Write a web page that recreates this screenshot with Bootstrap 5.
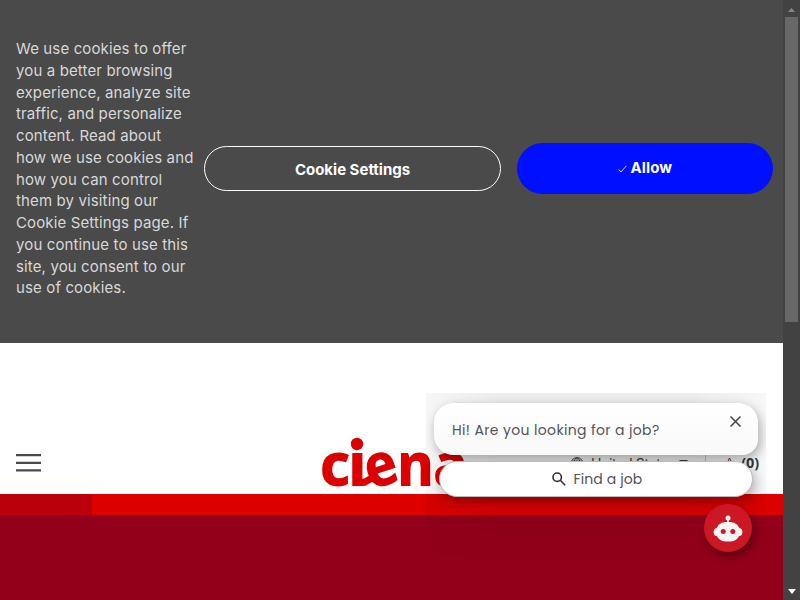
<!DOCTYPE html>
<html lang="en">
<head>
<meta charset="utf-8">
<meta name="viewport" content="width=device-width, initial-scale=1">
<title>Ciena careers</title>
<link href="https://cdn.jsdelivr.net/npm/bootstrap@5.3.0/dist/css/bootstrap.min.css" rel="stylesheet">
<style>
body{width:800px;height:600px;font-family:Inter,"Liberation Sans",sans-serif;background:#fff}
.page{width:783px}
.cookie{height:343px;background:#4a4a4a}
.cookie-copy{width:188px;margin:0 0 6px 16px;font-size:15px;line-height:21.75px;letter-spacing:.13px;color:#d8d8d8;white-space:nowrap}
.cookie-copy span{display:block}
.cookie-actions{margin-bottom:6px}
.btn-settings{width:297px;height:45px;border:1px solid #fff;border-radius:23px;color:#fff;font-weight:700;font-size:15px;letter-spacing:0;padding:3px 0 0}
.btn-allow{width:256px;height:51px;margin-left:16px;border:0;border-radius:26px;background:#000fff;color:#fff;font-weight:700;font-size:15px;letter-spacing:.15px;padding:0}
.site-head{height:151px}
.burger{width:25px;margin:111px 0 0 16px}
.brand-logo{margin:90px 0 0 276px;overflow:visible}
.links{margin:111px 0 0 103px;font-size:14px;line-height:20px;color:#444}
.place{margin-left:7px;letter-spacing:-.35px}
.divide{width:1px;height:18px;margin:0 16px 0 17px;background:#ccc}
.saved{font:700 14.5px/20px "Open Sans",sans-serif;color:#333b4b;margin:-2px 0 0 4px}
.strip{height:21px;background:#d00}
.strip-dark{width:92px;background:#b9000b}
.hero{height:85px;background:#93001a}
.widget{left:426px;top:393px;width:340px;height:180px;padding:10px 8px;overflow:hidden}
.haze{left:0;top:0;width:340px;height:180px;background:linear-gradient(180deg,rgba(0,0,0,.075),rgba(0,0,0,.08) 35%,rgba(0,0,0,.09) 58%,rgba(0,0,0,.02) 80%,transparent);-webkit-mask-image:linear-gradient(90deg,rgba(0,0,0,.45),#000 22%,#000 78%,rgba(0,0,0,.4))}
.bubble{position:relative;width:324px;height:52px;border-radius:20px 20px 16px 20px;background:linear-gradient(180deg,#fff,#f9f9f9);box-shadow:2px 4px 11px rgba(0,0,0,.32);padding:2px 17px 0 18px}
.close-x{margin-top:-17px}
.chat-text{font:400 14px/24px Poppins,Lato,sans-serif;letter-spacing:.36px;color:#555;white-space:nowrap}
.find{position:relative;width:314px;height:36px;margin:6px 0 0 5px;padding-left:2px;border:1px solid #bbb;border-radius:18px;background:#fff;box-shadow:2px 4px 12px rgba(0,0,0,.3)}
.find .chat-text{letter-spacing:.1px}
.bot{left:704px;top:504px;width:48px;height:48px;background:#cc1824;box-shadow:2px 4px 9px rgba(0,0,0,.4)}
.scroll{width:17px;background:#424242}
.thumb{width:13px;height:305px;margin-top:5px;background:#686868}
.arrow-down{margin-bottom:2px}
</style>
<script src="https://cdn.jsdelivr.net/npm/bootstrap@5.3.0/dist/js/bootstrap.bundle.min.js"></script>
</head>
<body class="d-flex overflow-hidden position-relative">
<main class="page flex-shrink-0">
  <section class="cookie d-flex align-items-center">
    <p class="cookie-copy"><span>We use cookies to offer</span><span>you a better browsing</span><span>experience, analyze site</span><span>traffic, and personalize</span><span>content. Read about</span><span>how we use cookies and</span><span>how you can control</span><span>them by visiting our</span><span>Cookie Settings page. If</span><span>you continue to use this</span><span>site, you consent to our</span><span>use of cookies.</span></p>
    <div class="cookie-actions d-flex align-items-center">
      <button class="btn btn-settings">Cookie Settings</button>
      <button class="btn btn-allow"><svg width="9" height="8" viewBox="0 0 9 8" fill="none" stroke="#d9dcff"><path d="M.6 4.4 3 7 8.4.8"/></svg> Allow</button>
    </div>
  </section>
  <header class="site-head d-flex align-items-start">
    <svg class="burger flex-shrink-0" height="18" viewBox="0 0 25 18"><path d="M0 1h25M0 8.8h25M0 16.3h25" stroke="#4a4a4a" stroke-width="2.3"/></svg>
    <svg class="brand-logo flex-shrink-0" width="150" height="60" viewBox="0 0 150 60" fill="#d00" font-family="Noto Sans" font-weight="800" font-size="60"><text x="2.5" y="53" textLength="31" lengthAdjust="spacingAndGlyphs">c</text><text x="31" y="53">ı</text><text x="48" y="53" textLength="33" lengthAdjust="spacingAndGlyphs" transform="rotate(-18 64 37)">e</text><text x="80" y="53" textLength="37" lengthAdjust="spacingAndGlyphs">n</text><text x="116" y="53" textLength="35" lengthAdjust="spacingAndGlyphs">a</text><circle cx="40" cy="11" r="6.2"/><path d="M39 43q1 8 9 6l7-4" fill="none" stroke="#d00" stroke-width="7"/></svg>
    <div class="links d-flex align-items-center text-nowrap">
      <svg width="14" height="14" viewBox="0 0 14 14" fill="none" stroke="#444"><circle cx="7" cy="7" r="6.3"/><ellipse cx="7" cy="7" rx="3" ry="6.3"/><path d="M7 1v12M1 7h12M2 4h10M2 10h10" stroke-width=".7"/></svg>
      <span class="place">United States</span>
      <svg class="ms-1 mb-1" width="9" height="5" viewBox="0 0 9 5"><path d="M0 0h9L4.5 5z" fill="#444"/></svg>
      <span class="divide"></span>
      <svg width="15" height="14" viewBox="0 0 15 14" fill="none" stroke="#7b3444"><path d="m7.500 1 2 4.200 4.500.5-3.300 3.200.8 4.400-4-2.200-4 2.200.8-4.400L1 5.700l4.500-.5z"/></svg>
      <span class="saved">(0)</span>
    </div>
  </header>
  <div class="strip d-flex"><div class="strip-dark"></div></div>
  <section class="hero"></section>
</main>
<aside class="scroll d-flex flex-column align-items-center justify-content-between py-1">
  <div class="d-flex flex-column align-items-center">
    <svg width="7" height="4" viewBox="0 0 7 4" class="mt-1"><path d="M0 4 3.5 0 7 4z" fill="#888"/></svg>
    <div class="thumb"></div>
  </div>
  <svg class="arrow-down" width="8" height="5" viewBox="0 0 8 5"><path d="M0 0h8L4 5z" fill="#fff"/></svg>
</aside>
<section class="widget position-absolute">
  <div class="haze position-absolute"></div>
  <div class="bubble d-flex align-items-center justify-content-between">
    <span class="chat-text">Hi! Are you looking for a job?</span>
    <svg class="close-x" width="11" height="11" viewBox="0 0 11 11"><path d="m.5.5 10 10m0-10-10 10" stroke="#444" stroke-width="1.5"/></svg>
  </div>
  <div class="find d-flex align-items-center justify-content-center">
    <svg width="14" height="14" viewBox="0 0 14 14" fill="none" stroke="#333" stroke-width="1.6"><circle cx="5.2" cy="5.2" r="4.2"/><path d="m8 8 5.2 5.2"/></svg>
    <span class="chat-text ms-2">Find a job</span>
  </div>
</section>
<button class="bot btn rounded-circle p-0 border-0 position-absolute d-flex align-items-center justify-content-center" aria-label="Chat">
  <svg width="30" height="27" viewBox="0 0 30 27"><g fill="#f5f5f5"><circle cx="15" cy="3" r="2.5"/><path d="M14.200 4h1.600v4h-1.600z"/><rect x="3" y="7" width="24" height="19.500" rx="9.500"/><rect x=".7" y="13" width="28.600" height="8" rx="3.500"/></g><circle cx="10.200" cy="16.500" r="2.500" fill="#cc1824"/><circle cx="19.800" cy="16.500" r="2.500" fill="#cc1824"/></svg>
</button>
</body>
</html>
